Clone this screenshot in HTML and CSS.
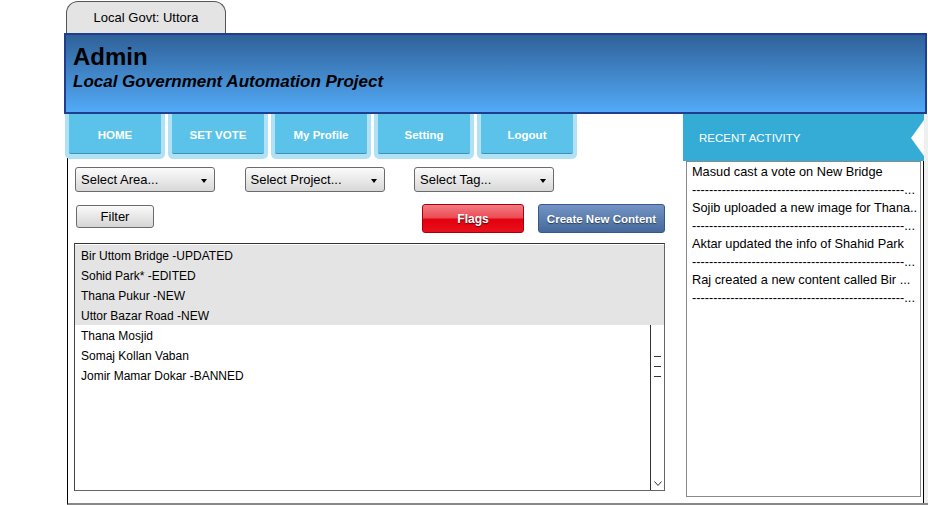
FILE: index.html
```html
<!DOCTYPE html>
<html>
<head>
<meta charset="utf-8">
<title>Admin - Local Government Automation Project</title>
<link rel="stylesheet" href="styles.css">
</head>
<body>
<div class="tabbar"><div class="tab">Local Govt: Uttora</div></div>
<header class="header">
  <h1 class="title">Admin</h1>
  <p class="subtitle">Local Government Automation Project</p>
</header>
<div class="main">
  <section class="content">
    <nav class="nav">
      <a class="navbtn"><span class="navin">HOME</span></a>
      <a class="navbtn"><span class="navin">SET VOTE</span></a>
      <a class="navbtn"><span class="navin">My Profile</span></a>
      <a class="navbtn"><span class="navin">Setting</span></a>
      <a class="navbtn"><span class="navin">Logout</span></a>
    </nav>
    <div class="filters">
      <div class="select"><span>Select Area...</span><span class="caret"></span></div>
      <div class="select"><span>Select Project...</span><span class="caret"></span></div>
      <div class="select"><span>Select Tag...</span><span class="caret"></span></div>
    </div>
    <div class="actions">
      <button class="btn filter">Filter</button>
      <button class="btn flags">Flags</button>
      <button class="btn create">Create New Content</button>
    </div>
    <div class="list">
      <div class="row sel">Bir Uttom Bridge -UPDATED</div>
      <div class="row sel">Sohid Park* -EDITED</div>
      <div class="row sel">Thana Pukur -NEW</div>
      <div class="row sel">Uttor Bazar Road -NEW</div>
      <div class="lower">
        <div class="items">
          <div class="row">Thana Mosjid</div>
          <div class="row">Somaj Kollan Vaban</div>
          <div class="row">Jomir Mamar Dokar -BANNED</div>
        </div>
        <div class="scroll">
          <div class="thumb"><i></i><i></i><i></i></div>
          <svg class="down" width="8" height="5" viewBox="0 0 8 5"><polyline points="0.5,0.5 4,4.5 7.5,0.5" fill="none" stroke="#333" stroke-width="1"/></svg>
        </div>
      </div>
    </div>
  </section>
  <aside class="side">
    <div class="side-head"><span>RECENT ACTIVITY</span><span class="notch"></span></div>
    <div class="activity">
      <div class="line">Masud cast a vote on New Bridge</div>
      <div class="line">--------------------------------------------------...</div>
      <div class="line">Sojib uploaded a new image for Thana..</div>
      <div class="line">--------------------------------------------------...</div>
      <div class="line">Aktar updated the info of Shahid Park</div>
      <div class="line">--------------------------------------------------...</div>
      <div class="line">Raj created a new content called Bir ...</div>
      <div class="line">--------------------------------------------------...</div>
    </div>
  </aside>
  <div class="edge"></div>
</div>
</body>
</html>
```

FILE: styles.css
```css
* { box-sizing: border-box; }
html, body { margin: 0; padding: 0; }
body {
  width: 928px;
  height: 505px;
  overflow: hidden;
  background: #fff;
  color: #000;
  font-family: "Liberation Sans", Arial, sans-serif;
}

.tabbar { height: 33px; padding-left: 66px; padding-top: 1px; }
.tab {
  width: 160px;
  height: 32px;
  border: 1px solid #555;
  border-bottom: 0;
  border-radius: 12px 12px 0 0;
  background: #e4e4e4;
  font-size: 13px;
  line-height: 30px;
  padding-top: 1px;
  text-align: center;
}

.header {
  margin-left: 64px;
  width: 863px;
  height: 81px;
  border: 2px solid #203e8d;
  background: linear-gradient(#2f6199, #52aaf7);
  padding: 10px 0 0 7px;
}
.title { margin: 0; font-size: 24px; line-height: 24px; font-weight: bold; }
.subtitle { margin: 3px 0 0; font-size: 17px; line-height: 20px; font-weight: bold; font-style: italic; }

.main {
  display: flex;
  margin-left: 67px;
  height: 391px;
  border-left: 1px solid #000;
  border-bottom: 2px solid #888;
}
.content { width: 615px; padding-right: 18px; }

.nav { display: flex; gap: 3px; margin-left: -3px; }
.navbtn {
  width: 100px;
  height: 45px;
  padding: 0 4px 5px;
  background: #b1e1f4;
  border-radius: 0 0 5px 5px;
  display: flex;
}
.navin {
  flex: 1;
  background: #5bc3ea;
  border-bottom: 1px solid #3f90bd;
  border-radius: 0 0 2px 2px;
  color: #fff;
  font-weight: bold;
  font-size: 11.5px;
  display: flex;
  align-items: center;
  justify-content: center;
  padding-top: 3px;
}

.filters { display: flex; gap: 29.5px; margin: 8px 0 0 7px; }
.select {
  width: 140px;
  height: 25px;
  border: 1px solid #6b6b6b;
  border-radius: 3px;
  background: linear-gradient(#fbfbfb, #d8d8d8);
  font-size: 13px;
  display: flex;
  align-items: center;
  justify-content: space-between;
  padding: 0 7px 0 5px;
}
.caret {
  width: 0; height: 0;
  border-left: 3.5px solid transparent;
  border-right: 3.5px solid transparent;
  border-top: 4px solid #000;
  margin-top: 2px;
}

.actions { display: flex; align-items: flex-start; margin: 12px 0 0 8px; }
.btn { font-family: inherit; margin: 0; padding: 0; }
.filter {
  width: 78px;
  height: 23px;
  margin-top: 1px;
  border: 1px solid #6b6b6b;
  border-radius: 3px;
  background: linear-gradient(#fafafa, #d5d5d5);
  font-size: 13px;
  color: #000;
}
.flags {
  width: 102px;
  height: 29px;
  margin-left: auto;
  border: 1px solid #a8000a;
  border-radius: 3px;
  background: linear-gradient(#f17b83 0%, #ec4d55 46%, #e4000e 54%, #e8101c 100%);
  color: #fff;
  font-weight: bold;
  font-size: 12px;
  padding-top: 1px;
  text-shadow: 0 1px 1px rgba(0,0,0,.6);
}
.create {
  width: 127px;
  height: 29px;
  margin-left: 14px;
  border: 1px solid #34598a;
  border-radius: 3px;
  background: linear-gradient(#7394c4, #46699b);
  color: #fff;
  font-weight: bold;
  font-size: 11.5px;
  text-shadow: 0 1px 1px rgba(0,0,0,.5);
}

.list {
  margin: 10px 0 0 6px;
  height: 248px;
  border: 1px solid #666;
  border-top-color: #333;
  border-left-color: #444;
  display: flex;
  flex-direction: column;
  padding-top: 1px;
}
.row { height: 20px; line-height: 22px; padding-left: 6px; font-size: 12px; white-space: nowrap; }
.sel { background: #e4e4e4; }
.lower { flex: 1; display: flex; }
.items { flex: 1; }
.scroll {
  width: 14px;
  border-left: 1px solid #333;
  display: flex;
  flex-direction: column;
  align-items: center;
  justify-content: space-between;
  padding: 31px 0 4px;
}
.thumb { display: flex; flex-direction: column; gap: 9px; }
.thumb i { display: block; width: 7px; height: 1px; background: #333; }
.down { display: block; }

.side { width: 241px; border-right: 1px solid #000; display: flex; flex-direction: column; }
.side-head {
  height: 47px;
  margin-right: -1px;
  background: #34acd5;
  display: flex;
  align-items: center;
  justify-content: space-between;
  padding-left: 16px;
  color: #fff;
  font-size: 11.5px;
}
.notch {
  width: 0; height: 0;
  border-top: 18px solid transparent;
  border-bottom: 18px solid transparent;
  border-right: 13px solid #fff;
}
.activity {
  height: 336px;
  margin: 0 2px 0 3px;
  border: 1px solid #8a8a8a;
  padding: 1px 2px 0 5px;
  font-size: 12.75px;
}
.line { height: 18px; line-height: 18px; white-space: nowrap; overflow: hidden; }

.edge { width: 4px; background: #efefef; }
```
